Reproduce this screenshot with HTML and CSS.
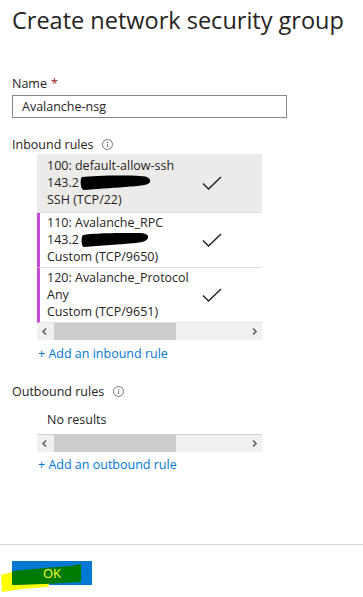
FILE: index.html
```html
<!DOCTYPE html>
<html lang="en">
<head>
  <meta charset="UTF-8" />
  <meta name="viewport" content="width=device-width, initial-scale=1.0"/>
  <title>Create network security group</title>
  <link rel="stylesheet" href="styles.css">
</head>
<body>

  <div class="blade">
    <h1 class="blade-title">Create network security group</h1>

    <div class="field">
      <label class="field-label" for="nsg-name">Name <span class="required">*</span></label>
      <input class="text-input" id="nsg-name" type="text" value="Avalanche-nsg">
    </div>

    <div class="section">
      <div class="field-label">
        Inbound rules
        <svg class="info" width="11" height="11" viewBox="0 0 11 11"><circle cx="5.5" cy="5.5" r="5" fill="none" stroke="#7a7876"/><circle cx="5.5" cy="3.3" r="0.7" fill="#7a7876"/><path d="M5.5 4.8v3.3" stroke="#7a7876"/></svg>
      </div>

      <div class="grid">
        <div class="rule selected">
          <div class="rule-info">
            <div>100: default-allow-ssh</div>
            <div>143.2<svg class="redact" width="72" height="16" viewBox="0 0 72 16"><path d="M2 2 C12 1 40 0 60 1 C68 1 71 4 70 7 C69 10 60 11 45 12 C30 13 15 14 4 15 C0 15 0 3 2 2 Z" fill="#000"/></svg></div>
            <div>SSH (TCP/22)</div>
          </div>
          <svg class="check" width="20" height="14" viewBox="0 0 20 14"><path d="M1 7.5 L6.5 13 L19 1" fill="none" stroke="#201f1e" stroke-width="1.4"/></svg>
        </div>
        <div class="rule custom">
          <div class="rule-info">
            <div>110: Avalanche_RPC</div>
            <div>143.2<svg class="redact" width="72" height="16" viewBox="0 0 72 16"><path d="M3 3 C14 1 40 1 58 1 C66 1 69 3 68 6 C67 10 58 11 44 12 C30 13 16 14 4 15 C1 15 1 4 3 3 Z" fill="#000"/></svg></div>
            <div>Custom (TCP/9650)</div>
          </div>
          <svg class="check" width="20" height="14" viewBox="0 0 20 14"><path d="M1 7.5 L6.5 13 L19 1" fill="none" stroke="#201f1e" stroke-width="1.4"/></svg>
        </div>
        <div class="rule custom">
          <div class="rule-info">
            <div>120: Avalanche_Protocol</div>
            <div>Any</div>
            <div>Custom (TCP/9651)</div>
          </div>
          <svg class="check" width="20" height="14" viewBox="0 0 20 14"><path d="M1 7.5 L6.5 13 L19 1" fill="none" stroke="#201f1e" stroke-width="1.4"/></svg>
        </div>
        <div class="hscroll">
          <svg class="arrow" width="17" height="17" viewBox="0 0 17 17"><path d="M9 5.5 L6 8.5 L9 11.5" fill="none" stroke="#606060" stroke-width="1.6"/></svg>
          <div class="track"><div class="thumb"></div></div>
          <svg class="arrow" width="17" height="17" viewBox="0 0 17 17"><path d="M8 5.5 L11 8.5 L8 11.5" fill="none" stroke="#606060" stroke-width="1.6"/></svg>
        </div>
      </div>

      <a class="add-link" href="#">+ Add an inbound rule</a>
    </div>

    <div class="section outbound">
      <div class="field-label">
        Outbound rules
        <svg class="info" width="11" height="11" viewBox="0 0 11 11"><circle cx="5.5" cy="5.5" r="5" fill="none" stroke="#7a7876"/><circle cx="5.5" cy="3.3" r="0.7" fill="#7a7876"/><path d="M5.5 4.8v3.3" stroke="#7a7876"/></svg>
      </div>

      <div class="grid">
        <div class="empty">No results</div>
        <div class="hscroll">
          <svg class="arrow" width="17" height="17" viewBox="0 0 17 17"><path d="M9 5.5 L6 8.5 L9 11.5" fill="none" stroke="#606060" stroke-width="1.6"/></svg>
          <div class="track"><div class="thumb"></div></div>
          <svg class="arrow" width="17" height="17" viewBox="0 0 17 17"><path d="M8 5.5 L11 8.5 L8 11.5" fill="none" stroke="#606060" stroke-width="1.6"/></svg>
        </div>
      </div>

      <a class="add-link" href="#">+ Add an outbound rule</a>
    </div>
  </div>

  <div class="footer">
    <button class="ok-button">
      <!-- highlighter marks drawn over the button -->
      <svg class="scribble" width="104" height="40" viewBox="0 0 104 40">
        <path d="M1 20 L12 17 L12 30 L50 28 L47 32 L22 34 L2 37 Z" fill="#ffff00"/>
        <path d="M12 16 L45 13 L70 11 L81 9 L81 27 L45 29 L12 30 Z" fill="#007a00"/>
      </svg>
      <span class="ok-label">OK</span>
    </button>
  </div>

</body>
</html>
```

FILE: styles.css
```css
html, body {
  height: 100%;
}

body {
  margin: 0;
  display: flex;
  flex-direction: column;
  font-family: 'Open Sans', 'Noto Sans', sans-serif;
  font-size: 12.5px;
  line-height: 17px;
  color: #252423;
  background: #fff;
}

.blade {
  padding: 4px 12px 0;
}

.blade-title {
  margin: 0;
  font-size: 23.5px;
  font-weight: 500;
  line-height: 32px;
  color: #252423;
  white-space: nowrap;
}

.field {
  margin-top: 39px;
}

.field-label {
  display: flex;
  align-items: center;
}

.required {
  color: #a4262c;
  margin-left: 4px;
}

.text-input {
  display: block;
  margin-top: 3px;
  width: 275px;
  height: 23px;
  box-sizing: border-box;
  border: 1px solid #8a8886;
  padding: 0 9px;
  font-family: inherit;
  font-size: 12.5px;
  color: #252423;
  outline: none;
}

.section {
  margin-top: 18px;
}

.section.outbound {
  margin-top: 21px;
}

.info {
  margin-left: 9px;
}

.grid {
  margin: 1px 0 0 25px;
  width: 225px;
}

.rule {
  display: grid;
  grid-template-columns: 155px 20px;
  align-items: center;
  padding: 1px 0 2px 7px;
  border-left: 3px solid transparent;
  border-bottom: 1px solid #e1dfdd;
  white-space: nowrap;
}

.rule.selected {
  background: #edebe9;
  padding-top: 3px;
  padding-bottom: 4px;
}

.rule.custom {
  border-left-color: #c64fd6;
}

.rule:last-of-type {
  border-bottom-color: #d2d0ce;
}

.redact {
  vertical-align: -4px;
  margin-left: 1px;
}

.empty {
  padding: 10px 0 6px 10px;
  border-bottom: 1px solid #d2d0ce;
}

.hscroll {
  display: flex;
  height: 17px;
  background: #f0f0f0;
}

.track {
  flex: 1;
}

.thumb {
  width: 122px;
  height: 17px;
  background: #cdcdcd;
}

.add-link {
  display: block;
  margin: 5px 0 0 26px;
  color: #0078d4;
  text-decoration: none;
}

.outbound .add-link {
  margin-top: 4px;
}

.footer {
  margin-top: auto;
  border-top: 1px solid #d6d6d6;
  padding: 16px 12px 12px;
}

.ok-button {
  position: relative;
  display: block;
  width: 80px;
  height: 24px;
  padding: 0;
  border: none;
  background: #0078d4;
  font-family: inherit;
  font-size: 13px;
  color: #ffff33;
}

.scribble {
  position: absolute;
  left: -12px;
  top: -6px;
}

.ok-label {
  position: relative;
}
```
